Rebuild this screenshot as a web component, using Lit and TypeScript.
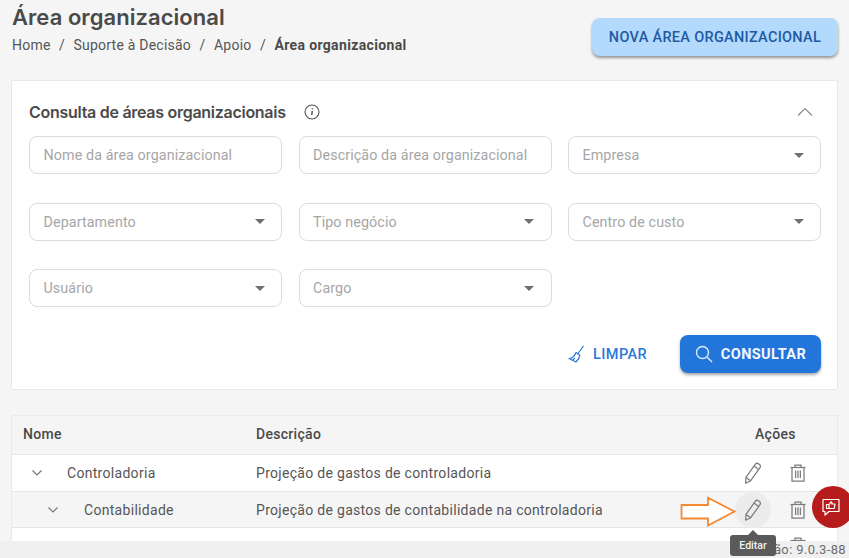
import { LitElement, html, css, svg } from "lit";
import { customElement } from "lit/decorators.js";

const pencil = svg`<svg width="24" height="24" viewBox="0 0 24 24" fill="none" stroke="#7c7c7c" stroke-width="1.25" stroke-linejoin="round"><path d="M4.6 22.2 L5 16.4 L14.2 3.4 C15 2.3 16.4 2.1 17.4 2.8 L18.5 3.6 C19.5 4.3 19.7 5.7 19 6.7 L9.7 19.7 Z"/><path d="M13 5.1 L17.7 8.5"/><path d="M5 16.4 L9.7 19.7"/></svg>`;
const trash = svg`<svg width="20" height="20" viewBox="0 0 20 20" fill="none" stroke="#7c7c7c" stroke-width="1.25"><path d="M2.5 4.5 H17.5"/><path d="M7 4.5 V2.2 H13 V4.5"/><path d="M4 4.5 V18 H16 V4.5"/><path d="M7.6 7.5 V15"/><path d="M10 7.5 V15"/><path d="M12.4 7.5 V15"/></svg>`;
const chev = svg`<svg width="12" height="8" viewBox="0 0 12 8" fill="none" stroke="#757575" stroke-width="1.2"><path d="M1.5 1.5 L6 6 L10.5 1.5"/></svg>`;

@customElement("app-root")
export class AppRoot extends LitElement {
  static styles = css`
    :host { display: block; position: relative; width: 849px; height: 558px; overflow: hidden; background: #f5f5f5; font-family: Roboto, "Liberation Sans", sans-serif; color: #424242; }
    .page { padding: 0 11px; }
    .head { display: flex; justify-content: space-between; align-items: flex-start; height: 80px; }
    .title { margin: 2px 0 0 1px; font: 600 22px/30px Inter, sans-serif; letter-spacing: .05px; color: #4a4a4a; }
    .crumbs { display: flex; gap: 8.5px; margin: 4px 0 0 1px; font-size: 14px; line-height: 18px; letter-spacing: .22px; color: #555; }
    .crumbs b { font-weight: 700; color: #4a4a4a; letter-spacing: .35px; font-size: 14px; }
    .btn-new { margin-top: 18px; width: 246px; height: 38px; box-sizing: border-box; border-radius: 8px; background: #b3d9fd; color: #1f5aa3; display: flex; align-items: center; justify-content: center; font-size: 14.5px; font-weight: 500; letter-spacing: .3px; box-shadow: 0 2px 3px rgba(0,0,0,.4); }
    .card { height: 310px; box-sizing: border-box; background: #fff; border: 1px solid #e8e8e8; border-radius: 2px; padding: 18px 16px 0 17px; display: flex; flex-direction: column; }
    .card-head { display: flex; align-items: center; height: 26px; margin-bottom: 11px; }
    .card-head h2 { margin: 0; font: 600 16px/26px Inter, Roboto, sans-serif; letter-spacing: -0.28px; color: #4a4a4a; }
    .info { margin-left: 18px; }
    .collapse { margin: 0 8px 0 auto; }
    .grid { display: grid; grid-template-columns: repeat(3, 253px); column-gap: 16.5px; row-gap: 28.5px; }
    .field { height: 38px; box-sizing: border-box; border: 1px solid #dcdcdc; border-radius: 8px; display: flex; align-items: center; justify-content: space-between; padding: 0 16.5px 0 13.5px; font-size: 14.3px; letter-spacing: .1px; color: #a6a6a6; }
    .caret { width: 0; height: 0; border-left: 5.5px solid transparent; border-right: 5.5px solid transparent; border-top: 5.5px solid #6f6f6f; }
    .actions { display: flex; justify-content: flex-end; align-items: center; margin-top: 28px; gap: 33px; }
    .limpar { display: flex; align-items: center; gap: 8px; color: #2a78d8; font-size: 14.5px; font-weight: 500; letter-spacing: .4px; }
    .consultar { width: 141px; height: 38px; border-radius: 8px; background: #2275d9; color: #f2f7fd; display: flex; align-items: center; justify-content: center; gap: 8px; font-size: 14.5px; font-weight: 700; letter-spacing: .4px; box-shadow: 0 2px 3px rgba(0,0,0,.35); }
    .table { margin-top: 25px; background: #fff; border: 1px solid #ebebeb; border-bottom: 0; font-size: 14px; letter-spacing: .3px; color: #555; }
    .row { display: grid; grid-template-columns: 244px 1fr 100px; align-items: center; border-bottom: 1px solid #e6e6e6; box-sizing: border-box; }
    .row.th { height: 39px; background: #f5f5f5; font-weight: 500; color: #4a4a4a; padding-bottom: 2px; }
    .row.th > :first-child { padding-left: 11px; }
    .row.th .acts { justify-content: flex-start; padding-left: 18px; }
    .row.r { height: 36.5px; }
    .row.alt { background: #f5f5f5; padding-top: 1px; }
    .name { display: flex; align-items: center; }
    .name svg { flex: none; }
    .l0 { padding-left: 19px; gap: 24px; }
    .l1 { padding-left: 35px; gap: 25px; }
    .acts { display: flex; align-items: center; gap: 21px; padding-left: 4px; }
    .ic { width: 24px; height: 24px; display: flex; align-items: center; justify-content: center; position: relative; }
    .ic.hover::before { content: ""; position: absolute; left: -6px; top: -6px; width: 36px; height: 36px; border-radius: 50%; background: #ececec; }
    .ic svg { position: relative; }
    .footer { position: absolute; left: 0; right: 0; bottom: 0; height: 17px; background: #f0f0f0; font-size: 13px; letter-spacing: .35px; color: #6e6e6e; display: flex; justify-content: flex-end; align-items: center; padding-right: 3px; box-sizing: border-box; }
    .tip { position: absolute; left: 730px; top: 535px; width: 46px; height: 21px; border-radius: 3px; background: #5a5a5a; color: #f2f2f2; font-size: 10.5px; font-weight: 500; display: flex; align-items: center; justify-content: center; }
    .tip::before { content: ""; position: absolute; top: -5px; left: 18px; border-left: 5px solid transparent; border-right: 5px solid transparent; border-bottom: 5px solid #5a5a5a; }
    .fab { position: absolute; left: 812px; top: 486px; width: 42px; height: 42px; border-radius: 50%; background: #b71c1c; display: flex; align-items: center; justify-content: center; padding-right: 4px; box-sizing: border-box; }
    .arrow { position: absolute; left: 680px; top: 496px; }
  `;

  field(label: string, caret = true) {
    return html`<div class="field"><span>${label}</span>${caret ? html`<span class="caret"></span>` : ""}</div>`;
  }

  render() {
    return html`
      <div class="page">
        <div class="head">
          <div>
            <h1 class="title">Área organizacional</h1>
            <div class="crumbs"><span>Home</span><span>/</span><span>Suporte à Decisão</span><span>/</span><span>Apoio</span><span>/</span><b>Área organizacional</b></div>
          </div>
          <div class="btn-new">NOVA ÁREA ORGANIZACIONAL</div>
        </div>
        <div class="card">
          <div class="card-head">
            <h2>Consulta de áreas organizacionais</h2>
            <svg class="info" width="16" height="16" viewBox="0 0 16 16" fill="none" stroke="#555" stroke-width="1.1"><circle cx="8" cy="8" r="7"/><path d="M8.3 7 L7.7 11.2" stroke-width="1.5"/><path d="M8.5 4.4 L8.4 5.4" stroke-width="1.5"/></svg>
            <svg class="collapse" width="16" height="10" viewBox="0 0 16 10" fill="none" stroke="#8a8a8a" stroke-width="1.2"><path d="M1 8.5 L8 1.5 L15 8.5"/></svg>
          </div>
          <div class="grid">
            ${this.field("Nome da área organizacional", false)}
            ${this.field("Descrição da área organizacional", false)}
            ${this.field("Empresa")}
            ${this.field("Departamento")}
            ${this.field("Tipo negócio")}
            ${this.field("Centro de custo")}
            ${this.field("Usuário")}
            ${this.field("Cargo")}
          </div>
          <div class="actions">
            <div class="limpar">
              <svg width="17" height="19" viewBox="0 0 17 19" fill="none" stroke="#2a78d8" stroke-width="1.2" stroke-linejoin="round"><path d="M15.5 1 L10 8.5"/><path d="M8 7.5 L11.8 10.3 C11.5 12.5 10 15 8 17 L1 13.5 C3.5 13.5 6.5 11 8 7.5 Z"/><path d="M4.5 15.5 L6.8 13"/></svg>
              <span>LIMPAR</span>
            </div>
            <div class="consultar">
              <svg width="18" height="18" viewBox="0 0 18 18" fill="none" stroke="#dce9f9" stroke-width="1.4"><circle cx="7.5" cy="7.5" r="6"/><path d="M12 12 L17 17"/></svg>
              <span>CONSULTAR</span>
            </div>
          </div>
        </div>
        <div class="table">
          <div class="row th"><div>Nome</div><div>Descrição</div><div class="acts">Ações</div></div>
          <div class="row r"><div class="name l0">${chev}<span>Controladoria</span></div><div>Projeção de gastos de controladoria</div><div class="acts"><span class="ic">${pencil}</span><span class="ic">${trash}</span></div></div>
          <div class="row r alt"><div class="name l1">${chev}<span>Contabilidade</span></div><div>Projeção de gastos de contabilidade na controladoria</div><div class="acts"><span class="ic hover">${pencil}</span><span class="ic">${trash}</span></div></div>
          <div class="row r"><div></div><div></div><div class="acts"><span class="ic">${pencil}</span><span class="ic">${trash}</span></div></div>
        </div>
      </div>
      <div class="footer">Versão: 9.0.3-88</div>
      <svg class="arrow" width="60" height="32" viewBox="0 0 60 32" fill="#fff" stroke="#f58a33" stroke-width="1.8"><path d="M1.5 9 H28 V1.8 L54.5 15.5 L28 29.5 V22.5 H1.5 Z"/></svg>
      <div class="tip">Editar</div>
      <div class="fab">
        <svg width="20" height="20" viewBox="0 0 20 20" fill="none" stroke="#fff" stroke-width="1.2" stroke-linejoin="round"><path d="M2 2.5 H18 V14.5 H8 L4 18 V14.5 H2 Z"/><path d="M5.5 7.5 H8 V11.5 H5.5 Z"/><path d="M8 7.5 L10 4.8 C10.8 4.8 11 5.4 10.8 7 H14 L13.2 11.5 H8"/></svg>
      </div>
    `;
  }
}
